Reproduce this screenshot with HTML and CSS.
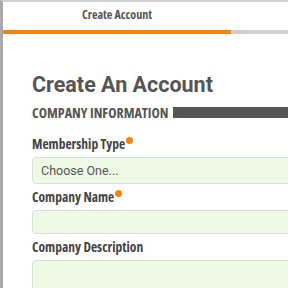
FILE: index.html
```html
<!DOCTYPE html>
<html>
<head>
  <title>Create Account</title>
  <link rel="stylesheet" href="styles.css">
</head>
<body>
  <div class="frame">
    <div class="tabs">
      <div class="tab active">Create Account</div>
      <div class="tab"></div>
    </div>

    <div class="container">
      <h1>Create An Account</h1>
      <div class="section-title">
        <span>COMPANY INFORMATION</span>
        <div class="section-bar"></div>
      </div>

      <form id="accountForm">
        <label for="membership">Membership Type<span class="req"></span></label>
        <select id="membership">
          <option value="">Choose One...</option>
        </select>

        <label for="companyName">Company Name<span class="req"></span></label>
        <input type="text" id="companyName">

        <label for="companyDesc">Company Description</label>
        <textarea id="companyDesc"></textarea>
      </form>
    </div>
  </div>
</body>
</html>
```

FILE: styles.css
```css
body {
  margin: 0;
  font-family: "Open Sans", "Noto Sans", sans-serif;
  font-stretch: 75%;
  background-color: #fff;
  color: #555;
  overflow: hidden;
}

.frame {
  border-left: 3px solid #a9a9a9;
  border-top: 2px solid #cfcfcf;
  min-height: 286px;
  width: 500px;
}

.tabs {
  display: flex;
}

.tab {
  flex: 0 0 228px;
  height: 28px;
  line-height: 26px;
  text-align: center;
  font-size: 12px;
  font-weight: bold;
  color: #555;
  border-bottom: 4px solid #cfcfcf;
}

.tab.active {
  border-bottom-color: #f7830f;
}

.container {
  padding: 38px 0 0 29px;
}

h1 {
  margin: 0;
  font-family: Roboto, "Liberation Sans", sans-serif;
  font-stretch: 100%;
  font-size: 21.5px;
  font-weight: bold;
  color: #555;
  line-height: 26px;
}

.section-title {
  display: flex;
  align-items: center;
  gap: 4px;
  margin-top: 5px;
  margin-bottom: 14px;
  font-size: 14px;
  font-weight: bold;
}

.section-bar {
  flex: 1;
  height: 11px;
  background-color: #555;
}

label {
  display: block;
  margin: 0 0 5px;
  font-size: 13.5px;
  line-height: 16px;
  font-weight: bold;
  color: #444;
}

.req {
  display: inline-block;
  width: 7px;
  height: 7px;
  margin-left: 1px;
  border-radius: 50%;
  background-color: #f7830f;
  vertical-align: 5px;
}

select,
input[type="text"],
textarea {
  display: block;
  box-sizing: border-box;
  width: 100%;
  margin: 0 0 5px;
  padding: 0 8px;
  border: 1px solid #dcdcdc;
  border-radius: 4px;
  background-color: #eef9e6;
  color: #555;
  font-family: Roboto, sans-serif;
  font-stretch: 100%;
  font-size: 12.5px;
  appearance: none;
}

select {
  height: 27px;
}

input[type="text"] {
  height: 24px;
}

textarea {
  height: 60px;
  resize: none;
}
```
